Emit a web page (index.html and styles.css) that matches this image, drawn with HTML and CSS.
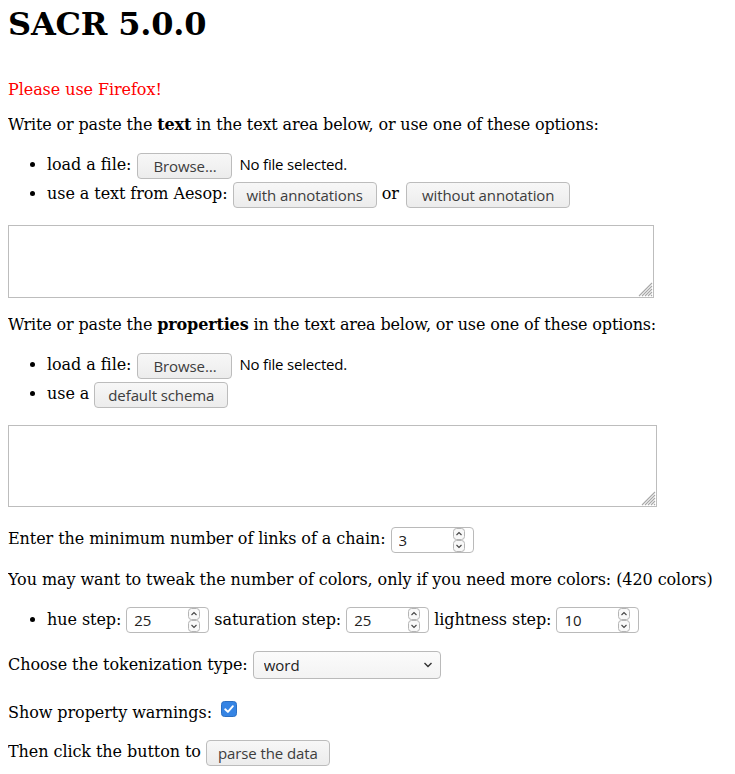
FILE: index.html
```html
<!DOCTYPE html>
<html>
<head>
<meta charset="utf-8">
<title>SACR 5.0.0</title>
<link rel="stylesheet" href="styles.css">
</head>
<body>
<h1>SACR 5.0.0</h1>
<p class="warn">Please use Firefox!</p>
<p class="intro">Write or paste the <b>text</b> in the text area below, or use one of these options:</p>
<ul class="opts">
  <li>load a file: <button class="btn btn-browse">Browse…</button><span class="nofile">No file selected.</span></li>
  <li>use a text from Aesop: <button class="btn">with annotations</button> or <button class="btn btn-wide">without annotation</button></li>
</ul>
<div class="ta-wrap ta-text">
  <textarea></textarea>
  <svg class="grip" width="15" height="15" viewBox="0 0 15 15"><path d="M14 1 L1 14 M14 4 L4 14 M14 7 L7 14 M14 10 L10 14 M14 13 L13 14" stroke="#a8a8a8" stroke-width="1.1" fill="none"/></svg>
</div>
<p class="intro intro2">Write or paste the <b>properties</b> in the text area below, or use one of these options:</p>
<ul class="opts">
  <li>load a file: <button class="btn btn-browse">Browse…</button><span class="nofile">No file selected.</span></li>
  <li>use a <button class="btn">default schema</button></li>
</ul>
<div class="ta-wrap ta-props">
  <textarea></textarea>
  <svg class="grip" width="15" height="15" viewBox="0 0 15 15"><path d="M14 1 L1 14 M14 4 L4 14 M14 7 L7 14 M14 10 L10 14 M14 13 L13 14" stroke="#a8a8a8" stroke-width="1.1" fill="none"/></svg>
</div>
<p class="row-min">Enter the minimum number of links of a chain: <span class="num"><input type="text" value="3"><svg class="spin" width="12" height="24" viewBox="0 0 12 24"><rect x="0.5" y="0.5" width="11" height="11" rx="3" fill="#f8f8f8" stroke="#b5b5b5"/><rect x="0.5" y="12.5" width="11" height="11" rx="3" fill="#f8f8f8" stroke="#b5b5b5"/><path d="M3.5 7 L6 4.5 L8.5 7" stroke="#444" stroke-width="1.1" fill="none"/><path d="M3.5 17 L6 19.5 L8.5 17" stroke="#444" stroke-width="1.1" fill="none"/></svg></span></p>
<p class="tweak">You may want to tweak the number of colors, only if you need more colors: (420 colors)</p>
<ul class="opts steps">
  <li>hue step: <span class="num"><input type="text" value="25"><svg class="spin" width="12" height="24" viewBox="0 0 12 24"><rect x="0.5" y="0.5" width="11" height="11" rx="3" fill="#f8f8f8" stroke="#b5b5b5"/><rect x="0.5" y="12.5" width="11" height="11" rx="3" fill="#f8f8f8" stroke="#b5b5b5"/><path d="M3.5 7 L6 4.5 L8.5 7" stroke="#444" stroke-width="1.1" fill="none"/><path d="M3.5 17 L6 19.5 L8.5 17" stroke="#444" stroke-width="1.1" fill="none"/></svg></span> saturation step: <span class="num"><input type="text" value="25"><svg class="spin" width="12" height="24" viewBox="0 0 12 24"><rect x="0.5" y="0.5" width="11" height="11" rx="3" fill="#f8f8f8" stroke="#b5b5b5"/><rect x="0.5" y="12.5" width="11" height="11" rx="3" fill="#f8f8f8" stroke="#b5b5b5"/><path d="M3.5 7 L6 4.5 L8.5 7" stroke="#444" stroke-width="1.1" fill="none"/><path d="M3.5 17 L6 19.5 L8.5 17" stroke="#444" stroke-width="1.1" fill="none"/></svg></span> lightness step: <span class="num"><input type="text" value="10"><svg class="spin" width="12" height="24" viewBox="0 0 12 24"><rect x="0.5" y="0.5" width="11" height="11" rx="3" fill="#f8f8f8" stroke="#b5b5b5"/><rect x="0.5" y="12.5" width="11" height="11" rx="3" fill="#f8f8f8" stroke="#b5b5b5"/><path d="M3.5 7 L6 4.5 L8.5 7" stroke="#444" stroke-width="1.1" fill="none"/><path d="M3.5 17 L6 19.5 L8.5 17" stroke="#444" stroke-width="1.1" fill="none"/></svg></span></li>
</ul>
<p class="row-tok">Choose the tokenization type: <span class="sel"><select><option>word</option></select><svg class="chev" width="10" height="6" viewBox="0 0 10 6"><path d="M1.5 1 L5 4.5 L8.5 1" stroke="#333" stroke-width="1.4" fill="none"/></svg></span></p>
<p class="row-warn">Show property warnings: <svg class="chk" width="16" height="16" viewBox="0 0 16 16"><rect x="0.5" y="0.5" width="15" height="15" rx="3" fill="#3584e4" stroke="#2c6fc2"/><path d="M4.2 8.3 L6.9 10.9 L11.9 5.2" fill="none" stroke="#fff" stroke-width="1.9" stroke-linecap="round" stroke-linejoin="round"/></svg></p>
<p class="row-go">Then click the button to <button class="btn btn-go">parse the data</button></p>
</body>
</html>
```

FILE: styles.css
```css
html {
  background: #fff;
}
body {
  margin: 0 8px;
  font-family: "DejaVu Serif", serif;
  font-size: 16px;
  line-height: 19px;
  letter-spacing: -0.07px;
  color: #000;
}
h1 {
  margin: 6px 0 0;
  font-size: 32px;
  line-height: 37px;
  font-weight: bold;
  letter-spacing: -0.2px;
}
p {
  margin: 0;
}
.warn {
  margin-top: 37px;
  color: #ff0000;
}
.intro {
  margin-top: 16px;
  letter-spacing: -0.15px;
}
.intro2 {
  margin-top: 17px;
}
ul.opts {
  margin: 16px 0 0;
  padding-left: 39px;
}
ul.opts li {
  height: 29px;
  line-height: 29px;
  white-space: nowrap;
}
.btn {
  box-sizing: border-box;
  height: 26px;
  margin: 0;
  padding: 0 13px;
  border: 1px solid #bcbcbc;
  border-radius: 4px;
  background: linear-gradient(#f7f7f7, #ececec);
  font-family: "Open Sans", sans-serif;
  font-size: 15px;
  line-height: 24px;
  letter-spacing: -0.1px;
  color: #3d3d3d;
  vertical-align: middle;
}
.btn-browse {
  margin-left: 1px;
  padding: 0 15px;
}
.btn-wide {
  margin-left: 2px;
  padding: 0 15px;
}
.btn-go {
  padding: 0 11px;
}
.nofile {
  margin-left: 7px;
  font-family: "Open Sans", sans-serif;
  font-size: 15px;
  letter-spacing: -0.2px;
  color: #000;
}
.ta-wrap {
  position: relative;
  margin-top: 17px;
}
.ta-text {
  width: 646px;
  height: 73px;
}
.ta-props {
  width: 649px;
  height: 82px;
}
textarea {
  display: block;
  box-sizing: border-box;
  width: 100%;
  height: 100%;
  margin: 0;
  padding: 2px;
  border: 1px solid #bdbdbd;
  resize: none;
  background: #fff;
}
.grip {
  position: absolute;
  right: 1px;
  bottom: 1px;
}
.row-min {
  margin-top: 19px;
  line-height: 26px;
}
.num {
  box-sizing: border-box;
  display: inline-flex;
  align-items: center;
  width: 83px;
  height: 26px;
  padding: 0 8px 0 7px;
  border: 1px solid #bababa;
  border-radius: 4px;
  background: #fff;
  vertical-align: middle;
}
.num input {
  flex: 1;
  width: 0;
  min-width: 0;
  margin: 0;
  padding: 0;
  border: 0;
  outline: 0;
  background: transparent;
  font-family: "Open Sans", sans-serif;
  font-size: 15px;
  color: #222;
}
.spin {
  display: block;
  flex: none;
}
.tweak {
  margin-top: 17px;
}
ul.steps {
  margin-top: 16px;
}
.row-tok {
  margin-top: 17px;
  line-height: 28px;
}
.sel {
  position: relative;
  display: inline-block;
  width: 188px;
  height: 28px;
  vertical-align: middle;
}
.sel select {
  -webkit-appearance: none;
  appearance: none;
  box-sizing: border-box;
  width: 100%;
  height: 100%;
  margin: 0;
  padding: 0 10px;
  border: 1px solid #bababa;
  border-radius: 4px;
  background: linear-gradient(#fbfbfb, #f3f3f3);
  font-family: "Open Sans", sans-serif;
  font-size: 15px;
  color: #222;
}
.chev {
  position: absolute;
  right: 8px;
  top: 11px;
  pointer-events: none;
}
.row-warn {
  margin-top: 22px;
}
.chk {
  margin-left: 4px;
  vertical-align: 1px;
}
.row-go {
  margin-top: 17px;
  line-height: 26px;
}
```
